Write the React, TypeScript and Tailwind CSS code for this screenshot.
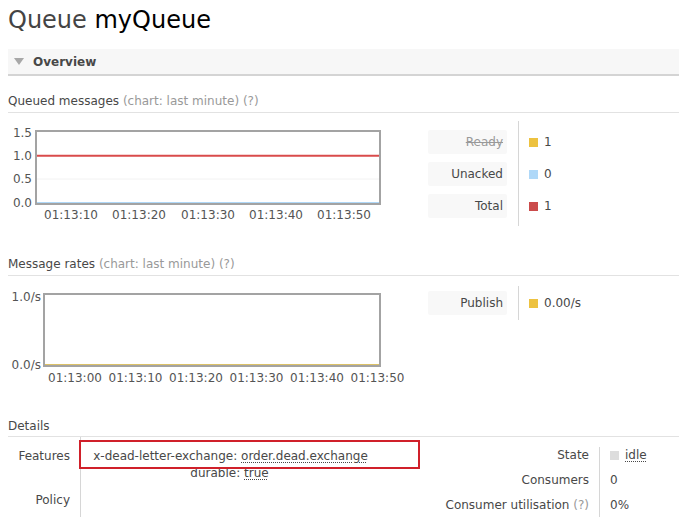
import React from "react";

const font = { fontFamily: '"DejaVu Sans", Verdana, sans-serif' };

function Chart1() {
  const xs = [63, 131, 200, 268, 336];
  const labels = ["01:13:10", "01:13:20", "01:13:30", "01:13:40", "01:13:50"];
  return (
    <svg width="420" height="105" className="block shrink-0" style={{ overflow: "visible" }}>
      <rect x="28" y="10" width="344" height="73" fill="#fff" />
      <line x1="29" y1="58" x2="371" y2="58" stroke="#f2f2f2" strokeWidth="1" />
      <line x1="29" y1="34.7" x2="371" y2="34.7" stroke="#d94b4b" strokeWidth="2" />
      <line x1="29" y1="82" x2="371" y2="82" stroke="#afd8f8" strokeWidth="2" />
      <rect x="28" y="10" width="344" height="73" fill="none" stroke="#a3a3a3" strokeWidth="2" />
      <g fontSize="12" fill="#545454" textAnchor="end" style={font}>
        <text x="24" y="16">1.5</text>
        <text x="24" y="39">1.0</text>
        <text x="24" y="62">0.5</text>
        <text x="24" y="86">0.0</text>
      </g>
      <g fontSize="12" fill="#545454" textAnchor="middle" style={font}>
        {labels.map((l, i) => (
          <text key={l} x={xs[i]} y="98">
            {l}
          </text>
        ))}
      </g>
    </svg>
  );
}

function Chart2() {
  const labels = ["01:13:00", "01:13:10", "01:13:20", "01:13:30", "01:13:40", "01:13:50"];
  return (
    <svg width="420" height="100" className="block shrink-0" style={{ overflow: "visible" }}>
      <rect x="36" y="8" width="336" height="72" fill="#fff" />
      <line x1="37" y1="79" x2="371" y2="79" stroke="#dcc167" strokeWidth="2" />
      <rect x="36" y="8" width="336" height="72" fill="none" stroke="#a3a3a3" strokeWidth="2" />
      <g fontSize="12" fill="#545454" textAnchor="end" style={font}>
        <text x="33" y="15">1.0/s</text>
        <text x="33" y="83">0.0/s</text>
      </g>
      <g fontSize="12" fill="#545454" style={font}>
        {labels.map((l, i) => (
          <text key={l} x={40 + i * 60.5} y="96">
            {l}
          </text>
        ))}
      </g>
    </svg>
  );
}

function SectionTitle({ title }: { title: string }) {
  return (
    <div className="border-b border-[#e2e2e2] pb-[3px] text-[12px] leading-[16px] text-[#484848]">
      {title} <span className="text-[#999]">(chart: last minute) (?)</span>
    </div>
  );
}

export default function App() {
  return (
    <div className="min-h-[517px] bg-white pl-2 text-[12px] text-[#484848]" style={font}>
      <h1 className="pt-[5px] text-[24px] leading-[30px] font-normal">
        <span className="text-[#444]">Queue </span>
        <span className="text-black">myQueue</span>
      </h1>

      <div className="mt-[14px] flex h-[27px] items-center border-b-2 border-[#d4d4d4] bg-[#f7f7f7]">
        <svg width="10" height="7" className="ml-[6px]">
          <polygon points="0,0 10,0 5,7" fill="#a8a8a8" />
        </svg>
        <span className="ml-[9px] text-[12px] font-bold text-[#484848]">Overview</span>
      </div>

      <div className="mt-[17px]">
        <SectionTitle title="Queued messages" />
      </div>

      <div className="mt-[8px] flex">
        <Chart1 />
        <div className="flex h-[105px]">
          <div className="flex flex-col gap-[8px] pt-[9px]">
            <div className="flex h-[24px] w-[79px] items-center justify-end rounded-[2px] bg-[#f8f8f8] pr-[4px] text-[#999] line-through">
              Ready
            </div>
            <div className="flex h-[24px] w-[79px] items-center justify-end rounded-[2px] bg-[#f8f8f8] pr-[4px]">
              Unacked
            </div>
            <div className="flex h-[24px] w-[79px] items-center justify-end rounded-[2px] bg-[#f8f8f8] pr-[4px]">
              Total
            </div>
          </div>
          <div className="ml-[11px] h-full w-px bg-[#d6d6d6]" />
          <div className="flex flex-col gap-[8px] pt-[9px] pl-[10px]">
            <div className="flex h-[24px] items-center gap-[6px]">
              <span className="h-[9px] w-[9px] bg-[#edc240]" />1
            </div>
            <div className="flex h-[24px] items-center gap-[6px]">
              <span className="h-[9px] w-[9px] bg-[#afd8f8]" />0
            </div>
            <div className="flex h-[24px] items-center gap-[6px]">
              <span className="h-[9px] w-[9px] bg-[#cb4b4b]" />1
            </div>
          </div>
        </div>
      </div>

      <div className="mt-[30px]">
        <SectionTitle title="Message rates" />
      </div>

      <div className="mt-[10px] flex">
        <Chart2 />
        <div className="flex h-[34px]">
          <div className="pt-[5px]">
            <div className="flex h-[24px] w-[79px] items-center justify-end rounded-[2px] bg-[#f8f8f8] pr-[4px]">
              Publish
            </div>
          </div>
          <div className="ml-[11px] h-full w-px bg-[#d6d6d6]" />
          <div className="pt-[5px] pl-[10px]">
            <div className="flex h-[24px] items-center gap-[6px]">
              <span className="h-[9px] w-[9px] bg-[#edc240]" />0.00/s
            </div>
          </div>
        </div>
      </div>

      <div className="mt-[32px] border-b border-[#e2e2e2] pb-[2px] text-[12px] leading-[16px]">Details</div>

      <div className="flex">
        <div className="flex">
          <div className="flex w-[72px] flex-col items-end pr-[10px]">
            <div className="mt-[11px] leading-[16px]">Features</div>
            <div className="mt-[28px] leading-[16px]">Policy</div>
          </div>
          <div className="relative w-[340px] border-l border-[#d6d6d6] pt-[4px] text-center" style={{ height: 83 }}>
            <div className="absolute left-[-2px] top-[3px] h-[29px] w-[341px] border-2 border-[#d0202a]" />
            <div className="pt-[7px] pr-[40px] leading-[16px]">
              x-dead-letter-exchange:{" "}
              <span className="underline decoration-dotted underline-offset-2">order.dead.exchange</span>
            </div>
            <div className="pt-[1px] pr-[42px] leading-[16px]">
              durable: <span className="underline decoration-dotted underline-offset-2">true</span>
            </div>
          </div>
        </div>
        <div className="ml-auto flex pt-[10px]">
          <div className="flex flex-col items-end gap-[9px] pr-[10px] leading-[16px]">
            <div>State</div>
            <div>Consumers</div>
            <div>
              Consumer utilisation <span className="text-[#999]">(?)</span>
            </div>
          </div>
          <div className="w-px bg-[#d6d6d6]" />
          <div className="flex w-[79px] flex-col gap-[9px] pl-[10px] leading-[16px]">
            <div className="flex items-center gap-[6px]">
              <span className="h-[9px] w-[9px] bg-[#dddddd]" />
              <span className="underline decoration-dotted underline-offset-2">idle</span>
            </div>
            <div>0</div>
            <div>0%</div>
          </div>
        </div>
      </div>
    </div>
  );
}
